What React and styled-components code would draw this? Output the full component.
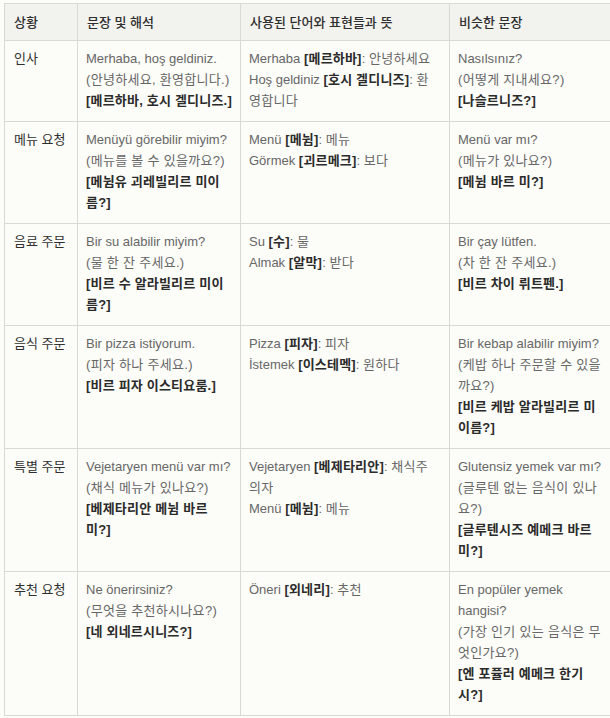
import React from 'react';
import styled, { createGlobalStyle } from 'styled-components';

const GlobalStyle = createGlobalStyle`
  html, body {
    margin: 0;
    padding: 0;
    background: #fcfcf8;
    overflow: hidden;
  }
  body {
    font-family: "Liberation Sans", "Noto Sans CJK KR", sans-serif;
  }
`;

const Page = styled.div`
  padding: 3px 0 0 4px;
  width: 640px;
`;

const Table = styled.table`
  border-collapse: collapse;
  table-layout: fixed;
  width: 607px;
  font-size: 13px;
  line-height: 21px;
  color: #666;
`;

const HeadCell = styled.th`
  background: #f2f2ee;
  border: 1px solid #d9d9d2;
  text-align: left;
  font-weight: 500;
  color: #2f2f2f;
  padding: 8px 8px 7px 9px;
`;

const Cell = styled.td`
  border: 1px solid #d9d9d2;
  vertical-align: top;
  padding: 7px ${(p) => p.$right || 8}px 10px ${(p) => (p.$label ? 9 : 8)}px;
  color: ${(p) => (p.$label ? '#2f2f2f' : '#676767')};
`;

const Line = styled.div``;

const Ko = styled.span`
  letter-spacing: 0.3px;
`;

const Pron = styled.span`
  font-weight: 700;
  color: #2b2b2b;
  letter-spacing: 0.2px;
`;

const rows = [
  {
    label: '인사',
    tr: 'Merhaba, hoş geldiniz.',
    ko: '(안녕하세요, 환영합니다.)',
    pron: '[메르하바, 호시 겔디니즈.]',
    words: [
      ['Merhaba', '[메르하바]', '안녕하세요'],
      ['Hoş geldiniz', '[호시 겔디니즈]', '환영합니다'],
    ],
    sim: ['Nasılsınız?', '(어떻게 지내세요?)', '[나슬르니즈?]'],
  },
  {
    label: '메뉴 요청',
    tr: 'Menüyü görebilir miyim?',
    ko: '(메뉴를 볼 수 있을까요?)',
    pron: '[메뉨유 괴레빌리르 미이름?]',
    words: [
      ['Menü', '[메뉨]', '메뉴'],
      ['Görmek', '[괴르메크]', '보다'],
    ],
    sim: ['Menü var mı?', '(메뉴가 있나요?)', '[메뉨 바르 미?]'],
  },
  {
    label: '음료 주문',
    tr: 'Bir su alabilir miyim?',
    ko: '(물 한 잔 주세요.)',
    pron: '[비르 수 알라빌리르 미이름?]',
    words: [
      ['Su', '[수]', '물'],
      ['Almak', '[알막]', '받다'],
    ],
    sim: ['Bir çay lütfen.', '(차 한 잔 주세요.)', '[비르 차이 뤼트펜.]'],
  },
  {
    label: '음식 주문',
    tr: 'Bir pizza istiyorum.',
    ko: '(피자 하나 주세요.)',
    pron: '[비르 피자 이스티요룸.]',
    words: [
      ['Pizza', '[피자]', '피자'],
      ['İstemek', '[이스테멕]', '원하다'],
    ],
    sim: ['Bir kebap alabilir miyim?', '(케밥 하나 주문할 수 있을까요?)', '[비르 케밥 알라빌리르 미이름?]'],
  },
  {
    label: '특별 주문',
    tr: 'Vejetaryen menü var mı?',
    ko: '(채식 메뉴가 있나요?)',
    pron: '[베제타리안 메뉨 바르 미?]',
    words: [
      ['Vejetaryen', '[베제타리안]', '채식주의자'],
      ['Menü', '[메뉨]', '메뉴'],
    ],
    sim: ['Glutensiz yemek var mı?', '(글루텐 없는 음식이 있나요?)', '[글루텐시즈 예메크 바르 미?]'],
  },
  {
    label: '추천 요청',
    tr: 'Ne önerirsiniz?',
    ko: '(무엇을 추천하시나요?)',
    pron: '[네 외네르시니즈?]',
    words: [['Öneri', '[외네리]', '추천']],
    sim: ['En popüler yemek hangisi?', '(가장 인기 있는 음식은 무엇인가요?)', '[엔 포퓰러 예메크 한기시?]'],
  },
];

export default function App() {
  return (
    <Page>
      <GlobalStyle />
      <Table>
        <colgroup>
          <col style={{ width: 73 }} />
          <col style={{ width: 163 }} />
          <col style={{ width: 209 }} />
          <col style={{ width: 162 }} />
        </colgroup>
        <thead>
          <tr>
            <HeadCell>상황</HeadCell>
            <HeadCell>문장 및 해석</HeadCell>
            <HeadCell>사용된 단어와 표현들과 뜻</HeadCell>
            <HeadCell>비슷한 문장</HeadCell>
          </tr>
        </thead>
        <tbody>
          {rows.map((r) => (
            <tr key={r.label}>
              <Cell $label>{r.label}</Cell>
              <Cell>
                <Line>{r.tr}</Line>
                <Line><Ko>{r.ko}</Ko></Line>
                <Line><Pron>{r.pron}</Pron></Line>
              </Cell>
              <Cell $right={11}>
                {r.words.map(([w, p, m]) => (
                  <Line key={w}>
                    {w} <Pron>{p}</Pron>: <Ko>{m}</Ko>
                  </Line>
                ))}
              </Cell>
              <Cell>
                <Line>{r.sim[0]}</Line>
                <Line><Ko>{r.sim[1]}</Ko></Line>
                <Line><Pron>{r.sim[2]}</Pron></Line>
              </Cell>
            </tr>
          ))}
        </tbody>
      </Table>
    </Page>
  );
}
